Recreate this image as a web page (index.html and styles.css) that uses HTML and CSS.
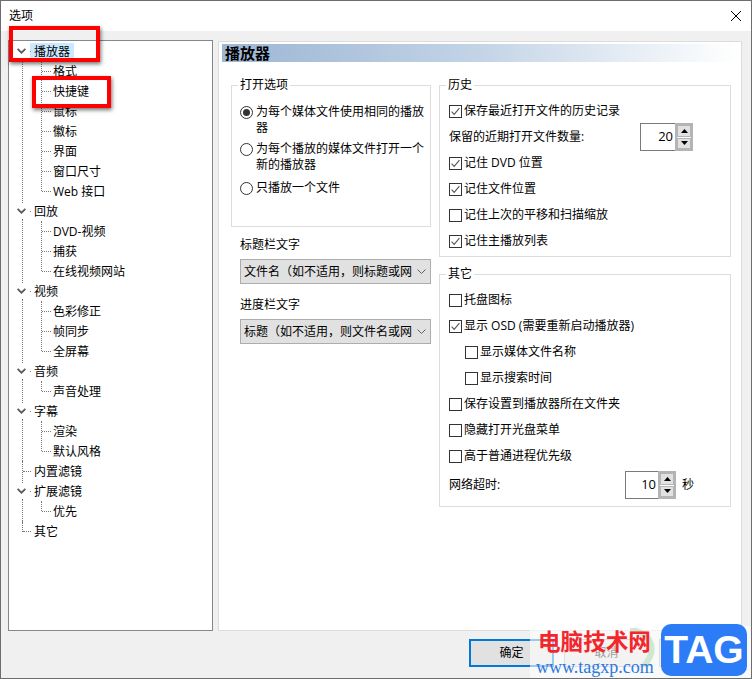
FILE: index.html
```html
<!DOCTYPE html>
<html lang="zh-CN">
<head>
<meta charset="utf-8">
<title>选项</title>
<link rel="stylesheet" href="styles.css">
</head>
<body>
<svg class="defs" width="0" height="0" aria-hidden="true">
  <symbol id="chev" viewBox="0 0 9 6"><path d="M0.6 0.8 L4.5 4.7 L8.4 0.8" fill="none" stroke="#5a5a5a" stroke-width="1.7"/></symbol>
  <symbol id="box" viewBox="0 0 13 13"><rect x="0.5" y="0.5" width="12" height="12" fill="#fff" stroke="#333"/></symbol>
  <symbol id="checked" viewBox="0 0 13 13"><rect x="0.5" y="0.5" width="12" height="12" fill="#fff" stroke="#333"/><path d="M2.6 6.6 L5.2 9.4 L10.4 3.2" fill="none" stroke="#555" stroke-width="1.1"/></symbol>
  <symbol id="radio" viewBox="0 0 13 13"><circle cx="6.5" cy="6.5" r="6" fill="#fff" stroke="#333"/></symbol>
  <symbol id="radio-on" viewBox="0 0 13 13"><circle cx="6.5" cy="6.5" r="6" fill="#fff" stroke="#333"/><circle cx="6.5" cy="6.5" r="3.5" fill="#333"/></symbol>
  <symbol id="up" viewBox="0 0 7 4"><path d="M3.5 0 L7 4 L0 4 Z" fill="#000"/></symbol>
  <symbol id="down" viewBox="0 0 7 4"><path d="M0 0 L7 0 L3.5 4 Z" fill="#000"/></symbol>
  <symbol id="drop" viewBox="0 0 9 5"><path d="M0.5 0.5 L4.5 4.5 L8.5 0.5" fill="none" stroke="#606060" stroke-width="1"/></symbol>
</svg>
<div class="window">
  <header class="titlebar">
    <span>选项</span>
    <svg class="close" viewBox="0 0 10 10"><path d="M0 0 L10 10 M10 0 L0 10" stroke="#000" stroke-width="1"/></svg>
  </header>
  <div class="main">
    <nav class="tree">
      <div class="group">
        <div class="row top"><svg class="chev"><use href="#chev"/></svg><span class="label selected">播放器</span></div>
        <div class="children">
          <div class="row child"><span class="label">格式</span></div>
          <div class="row child"><span class="label">快捷键</span></div>
          <div class="row child"><span class="label">鼠标</span></div>
          <div class="row child"><span class="label">徽标</span></div>
          <div class="row child"><span class="label">界面</span></div>
          <div class="row child"><span class="label">窗口尺寸</span></div>
          <div class="row child"><span class="label">Web 接口</span></div>
        </div>
      </div>
      <div class="group">
        <div class="row top"><svg class="chev"><use href="#chev"/></svg><span class="label">回放</span></div>
        <div class="children">
          <div class="row child"><span class="label">DVD-视频</span></div>
          <div class="row child"><span class="label">捕获</span></div>
          <div class="row child"><span class="label">在线视频网站</span></div>
        </div>
      </div>
      <div class="group">
        <div class="row top"><svg class="chev"><use href="#chev"/></svg><span class="label">视频</span></div>
        <div class="children">
          <div class="row child"><span class="label">色彩修正</span></div>
          <div class="row child"><span class="label">帧同步</span></div>
          <div class="row child"><span class="label">全屏幕</span></div>
        </div>
      </div>
      <div class="group">
        <div class="row top"><svg class="chev"><use href="#chev"/></svg><span class="label">音频</span></div>
        <div class="children">
          <div class="row child"><span class="label">声音处理</span></div>
        </div>
      </div>
      <div class="group">
        <div class="row top"><svg class="chev"><use href="#chev"/></svg><span class="label">字幕</span></div>
        <div class="children">
          <div class="row child"><span class="label">渲染</span></div>
          <div class="row child"><span class="label">默认风格</span></div>
        </div>
      </div>
      <div class="row leaf"><span class="label">内置滤镜</span></div>
      <div class="group">
        <div class="row top"><svg class="chev"><use href="#chev"/></svg><span class="label">扩展滤镜</span></div>
        <div class="children">
          <div class="row child"><span class="label">优先</span></div>
        </div>
      </div>
      <div class="row leaf last"><span class="label">其它</span></div>
    </nav>
    <section class="panel">
      <h1 class="panel-title">播放器</h1>
      <div class="columns">
        <div class="col">
          <fieldset class="box open-options">
            <legend>打开选项</legend>
            <div class="radios">
              <div class="radio-item"><svg class="tick"><use href="#radio-on"/></svg><span>为每个媒体文件使用相同的播放器</span></div>
              <div class="radio-item"><svg class="tick"><use href="#radio"/></svg><span>为每个播放的媒体文件打开一个新的播放器</span></div>
              <div class="radio-item"><svg class="tick"><use href="#radio"/></svg><span>只播放一个文件</span></div>
            </div>
          </fieldset>
          <div class="field-label first">标题栏文字</div>
          <div class="select"><span>文件名（如不适用，则标题或网</span><svg class="drop"><use href="#drop"/></svg></div>
          <div class="field-label">进度栏文字</div>
          <div class="select"><span>标题（如不适用，则文件名或网</span><svg class="drop"><use href="#drop"/></svg></div>
        </div>
        <div class="col">
          <fieldset class="box side history">
            <legend>历史</legend>
            <div class="opt"><svg class="tick"><use href="#checked"/></svg><span>保存最近打开文件的历史记录</span></div>
            <div class="opt between"><span>保留的近期打开文件数量:</span>
              <div class="spin"><div class="spin-value">20</div><div class="spin-btns"><div class="spin-btn"><svg class="arrow"><use href="#up"/></svg></div><div class="spin-btn"><svg class="arrow"><use href="#down"/></svg></div></div></div>
            </div>
            <div class="opt"><svg class="tick"><use href="#checked"/></svg><span>记住 DVD 位置</span></div>
            <div class="opt"><svg class="tick"><use href="#checked"/></svg><span>记住文件位置</span></div>
            <div class="opt"><svg class="tick"><use href="#box"/></svg><span>记住上次的平移和扫描缩放</span></div>
            <div class="opt"><svg class="tick"><use href="#checked"/></svg><span>记住主播放列表</span></div>
          </fieldset>
          <fieldset class="box side other">
            <legend>其它</legend>
            <div class="opt"><svg class="tick"><use href="#box"/></svg><span>托盘图标</span></div>
            <div class="opt"><svg class="tick"><use href="#checked"/></svg><span>显示 OSD (需要重新启动播放器)</span></div>
            <div class="opt indent"><svg class="tick"><use href="#box"/></svg><span>显示媒体文件名称</span></div>
            <div class="opt indent"><svg class="tick"><use href="#box"/></svg><span>显示搜索时间</span></div>
            <div class="opt"><svg class="tick"><use href="#box"/></svg><span>保存设置到播放器所在文件夹</span></div>
            <div class="opt"><svg class="tick"><use href="#box"/></svg><span>隐藏打开光盘菜单</span></div>
            <div class="opt"><svg class="tick"><use href="#box"/></svg><span>高于普通进程优先级</span></div>
            <div class="opt timeout"><span class="timeout-label">网络超时:</span>
              <div class="spin narrow"><div class="spin-value">10</div><div class="spin-btns"><div class="spin-btn"><svg class="arrow"><use href="#up"/></svg></div><div class="spin-btn"><svg class="arrow"><use href="#down"/></svg></div></div></div>
              <span>秒</span>
            </div>
          </fieldset>
        </div>
      </div>
    </section>
  </div>
  <footer class="footer">
    <button class="btn primary">确定</button>
    <button class="btn">取消</button>
    <button class="btn">应用</button>
  </footer>
  <div class="mark mark-one"></div>
  <div class="mark mark-two"></div>
  <div class="watermark">
    <svg class="swoosh" viewBox="0 0 40 40"><path d="M8 2 C30 4 36 22 22 38" fill="none" stroke="#cfe8d2" stroke-width="6"/></svg>
    <div class="wm-name">电脑技术网</div>
    <div class="wm-url">www.tagxp.com</div>
    <div class="wm-logo">TAG</div>
  </div>
</div>
</body>
</html>
```

FILE: styles.css
```css
* { box-sizing: border-box; }
html, body { margin: 0; padding: 0; }
body {
  width: 752px;
  height: 679px;
  overflow: hidden;
  font: 12px/16px "Open Sans", "Noto Sans CJK SC", sans-serif;
  color: #000;
}
.defs { position: absolute; }
.window {
  position: relative;
  width: 752px;
  height: 679px;
  border: 1px solid #6d6d6d;
  background: #f0f0f0;
  display: flex;
  flex-direction: column;
  overflow: hidden;
}
.titlebar {
  height: 30px;
  background: #fff;
  display: flex;
  align-items: center;
  justify-content: space-between;
  padding: 0 10px 0 8px;
  flex: none;
}
.close { width: 10px; height: 10px; }
.main {
  display: flex;
  gap: 5px;
  padding: 9px 9px 0 7px;
  flex: none;
}
.tree {
  width: 205px;
  height: 591px;
  background: #fff;
  border: 1px solid #828790;
  flex: none;
}
.group { position: relative; }
.group::before {
  content: "";
  position: absolute;
  left: 13px;
  top: 18px;
  bottom: -2px;
  border-left: 1px dotted #777;
}
.row {
  position: relative;
  height: 20px;
  display: flex;
  align-items: center;
}
.top { padding-left: 8px; }
.top::after {
  content: "";
  position: absolute;
  left: 21px;
  top: 10px;
  width: 1px;
  height: 1px;
  background: #888;
}
.chev { width: 9px; height: 6px; margin-right: 4px; flex: none; }
.label { padding: 0 4px; height: 17px; line-height: 17px; white-space: nowrap; }
.selected { background: #cce8ff; }
.children { position: relative; }
.children::before {
  content: "";
  position: absolute;
  left: 32px;
  top: 0;
  bottom: 10px;
  border-left: 1px dotted #777;
}
.child { padding-left: 40px; }
.child::before {
  content: "";
  position: absolute;
  left: 33px;
  top: 10px;
  width: 9px;
  border-top: 1px dotted #777;
}
.leaf { padding-left: 21px; }
.leaf::before {
  content: "";
  position: absolute;
  left: 14px;
  top: 10px;
  width: 8px;
  border-top: 1px dotted #777;
}
.leaf::after {
  content: "";
  position: absolute;
  left: 13px;
  top: 0;
  height: 22px;
  border-left: 1px dotted #777;
}
.leaf.last::after { height: 11px; }
.panel {
  width: 524px;
  height: 590px;
  margin-top: 1px;
  background: #fff;
  border: 1px solid #dcdcdc;
  padding: 2px 3px;
  flex: none;
}
.panel-title {
  margin: 0;
  height: 18px;
  font-size: 15px;
  line-height: 18px;
  font-weight: 700;
  padding-left: 3px;
  background: linear-gradient(90deg, #9cb6d4 0%, #c3d4e6 50%, #ffffff 100%);
}
.columns {
  display: grid;
  grid-template-columns: 200px 292px;
  gap: 8px;
  margin: 14px 0 0 9px;
}
.col { display: flex; flex-direction: column; min-width: 0; }
.box {
  margin: 0;
  min-width: 0;
  border: 1px solid #dcdcdc;
  padding: 0 0 0 8px;
}
.box legend {
  padding: 0 2px;
  margin-left: -2px;
  line-height: 18px;
}
.open-options { height: 151px; }
.radios {
  display: flex;
  flex-direction: column;
  gap: 5px;
  padding-top: 10px;
  padding-right: 4px;
}
.radio-item { display: flex; gap: 3px; width: 186px; }
.radio-item:last-child { margin-top: 2px; }
.radio-item .tick { margin-top: 2px; }
.tick { width: 13px; height: 13px; flex: none; }
.field-label { margin: 13px 0 6px 9px; }
.field-label.first { margin-top: 10px; }
.select {
  margin-left: 9px;
  width: 191px;
  height: 25px;
  background: #e1e1e1;
  border: 1px solid #adadad;
  display: flex;
  align-items: center;
  justify-content: space-between;
  padding: 0 4px 0 3px;
  white-space: nowrap;
}
.drop { width: 9px; height: 5px; flex: none; }
.side { padding-left: 9px; padding-right: 9px; }
.side legend { margin-left: -3px; }
.history { height: 181px; padding-top: 4px; }
.other { height: 242px; margin-top: 8px; padding-top: 4px; }
.opt {
  height: 26px;
  display: flex;
  align-items: center;
  gap: 2px;
  white-space: nowrap;
}
.between { justify-content: space-between; padding-right: 28px; }
.indent { padding-left: 16px; }
.spin { display: flex; width: 53px; height: 28px; flex: none; }
.spin.narrow { width: 51px; }
.spin-value {
  flex: 1;
  border: 1px solid #7a7a7a;
  border-right: 0;
  background: #fff;
  text-align: right;
  font-size: 13px;
  line-height: 24px;
  padding-right: 2px;
}
.spin-btns {
  width: 18px;
  border: 2px solid #b4b4b4;
  display: flex;
  flex-direction: column;
  gap: 1px;
  background: #fff;
}
.spin-btn {
  flex: 1;
  background: #e1e1e1;
  border: 1px solid #b4b4b4;
  display: flex;
  align-items: center;
  justify-content: center;
}
.arrow { width: 7px; height: 4px; }
.timeout { margin-top: 3px; gap: 0; }
.timeout-label { width: 176px; }
.timeout .spin { margin-right: 6px; }
.footer {
  display: flex;
  justify-content: flex-end;
  gap: 10px;
  padding: 8px 7px 0 0;
}
.btn {
  width: 85px;
  height: 28px;
  padding: 0;
  font: inherit;
  color: #000;
  background: #e1e1e1;
  border: 1px solid #adadad;
}
.primary { border: 2px solid #0078d7; }
.mark {
  position: absolute;
  border: 4px solid #f00;
  box-shadow: 1px 2px 4px rgba(0, 0, 0, 0.55);
}
.mark-one { left: 8px; top: 25px; width: 91px; height: 36px; }
.mark-two { left: 31px; top: 75px; width: 79px; height: 32px; }
.watermark {
  position: absolute;
  left: 529px;
  top: 625px;
  width: 221px;
  height: 52px;
  background: rgba(255, 255, 255, 0.6);
}
.swoosh { position: absolute; left: 92px; top: 2px; width: 40px; height: 40px; }
.wm-name {
  position: absolute;
  left: 8px;
  top: 1px;
  font: 700 22.6px/28px "Noto Sans CJK SC", sans-serif;
  color: #f3262c;
  white-space: nowrap;
}
.wm-url {
  position: absolute;
  left: 6px;
  top: 31px;
  font: 18px/20px "Liberation Serif", serif;
  color: #2b78e0;
  white-space: nowrap;
}
.wm-logo {
  position: absolute;
  left: 131px;
  top: -2px;
  width: 86px;
  height: 52px;
  border-radius: 10px;
  background: #2b7cf6;
  color: #fff;
  font: 700 39px/52px "Liberation Sans", sans-serif;
  text-align: center;
}
```
